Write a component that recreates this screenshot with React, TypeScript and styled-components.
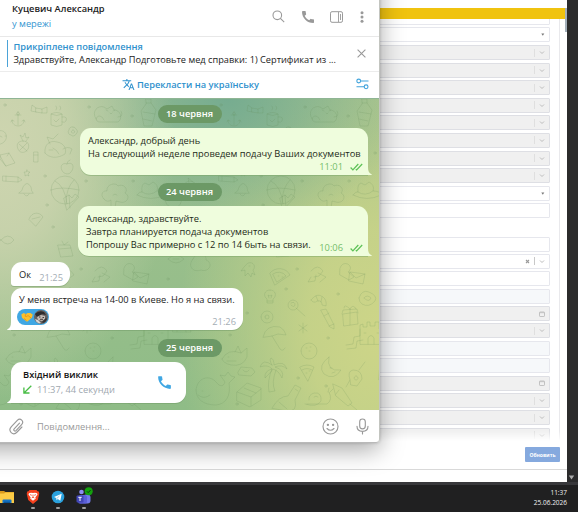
import styled, { createGlobalStyle, css } from "styled-components";
import { MdCall, MdTranslate } from "react-icons/md";

const GlobalStyle = createGlobalStyle`
    * {
        box-sizing: border-box;
    }
    body {
        margin: 0;
        overflow: hidden;
        font-family: "Open Sans", "Noto Sans", sans-serif;
        font-size: 9.3px;
        color: #222;
    }
    svg {
        display: block;
        flex-shrink: 0;
    }
`;

const Desktop = styled.div`
    position: relative;
    width: 578px;
    height: 512px;
    overflow: hidden;
    display: flex;
    flex-direction: column;
    background: #202021;
`;

/* ---------- browser page behind the chat ---------- */

const Browser = styled.div`
    height: 482px;
    display: flex;
`;

const Page = styled.div`
    width: 567px;
    background: #fff;
    display: flex;
    flex-direction: column;
`;

const Banner = styled.div`
    height: 11px;
    width: 565px;
    margin-top: 8px;
    background: #f0c30f;
    flex-shrink: 0;
`;

const PageBody = styled.div`
    height: 425px;
    display: flex;
    justify-content: space-between;
`;

const Form = styled.div`
    width: 560px;
    height: 424px;
    padding-right: 9px;
    border-right: 1px solid #e9e9ec;
    overflow: hidden;
    mask-image: linear-gradient(#000 412px, transparent 422px);
`;

const FieldGroup = styled.div<{ $top: number; $gap: number }>`
    display: flex;
    flex-direction: column;
    gap: ${(p) => p.$gap}px;
    margin-top: ${(p) => p.$top}px;
`;

const fills = {
    white: "#fff",
    grey: "#f0f0f0",
    blue: "#f6f8fa",
};

const Field = styled.div<{ $fill: keyof typeof fills }>`
    height: 15px;
    flex-shrink: 0;
    border: 1px solid ${(p) => (p.$fill === "grey" ? "#dedfe4" : "#e6e7ed")};
    border-radius: 1px;
    background: ${(p) => fills[p.$fill]};
    display: flex;
    align-items: center;
    justify-content: flex-end;
    gap: 4px;
    padding-right: 4px;
`;

const Divider = styled.i<{ $dark?: boolean }>`
    width: 1px;
    height: 8px;
    background: ${(p) => (p.$dark ? "#c8c8c8" : "#dfdfdf")};
`;

const ScrollThumb = styled.div`
    width: 2px;
    height: 24px;
    margin-top: -11px;
    background: #a3afb9;
`;

const PageFooter = styled.div`
    height: 26px;
    padding: 3px 7px 0 0;
    display: flex;
    justify-content: flex-end;
    border-bottom: 1px solid #d9d9d9;
`;

const UpdateButton = styled.button`
    width: 35px;
    height: 15px;
    padding: 0;
    border: 0;
    border-radius: 1px;
    background: #85a9de;
    color: #fff;
    font: 700 5px "Open Sans", sans-serif;
`;

const Gutter = styled.div`
    flex: 1;
    background: #2b2b2c;
    display: flex;
    align-items: flex-end;
    padding: 0 0 2px 1px;
`;

/* ---------- taskbar ---------- */

const Taskbar = styled.div`
    height: 30px;
    border-top: 3px solid #38383b;
    background: #202021;
    display: flex;
    justify-content: space-between;
    padding-right: 11px;
`;

const Apps = styled.div`
    display: flex;
    padding-top: 4px;
`;

const AppSlot = styled.div<{ $width: number; $running?: boolean }>`
    width: ${(p) => p.$width}px;
    display: flex;
    flex-direction: column;
    align-items: center;
    gap: 2px;
    &::after {
        content: "";
        width: 4px;
        height: 1.5px;
        border-radius: 1px;
        background: ${(p) => (p.$running ? "#a0a0a0" : "transparent")};
    }
`;

const Clock = styled.div`
    padding-top: 3px;
    color: #f2f2f2;
    font-size: 6.5px;
    line-height: 9.5px;
    text-align: right;
`;

/* ---------- chat window ---------- */

const ChatWindow = styled.div`
    position: absolute;
    left: 0;
    top: 0;
    width: 380px;
    height: 443px;
    display: flex;
    flex-direction: column;
    background: #fff;
    border-right: 1px solid #c3c5c0;
    border-bottom: 1px solid #b9b9b9;
    border-radius: 0 0 4px 0;
    overflow: hidden;
`;

const WindowShadow = styled.div`
    position: absolute;
    left: -40px;
    top: -40px;
    width: 420px;
    height: 483px;
    border-radius: 4px;
    box-shadow: 0 7px 24px rgba(0, 0, 0, 0.34), 0 0 3px rgba(0, 0, 0, 0.2);
`;

const ShadowClip = styled.div`
    position: absolute;
    left: 0;
    top: 0;
    width: 567px;
    height: 482px;
    overflow: hidden;
`;

const Header = styled.div`
    height: 37px;
    flex-shrink: 0;
    border-bottom: 1px solid #e8e8e8;
    display: flex;
    justify-content: space-between;
    padding: 2px 15px 0 12px;
`;

const Contact = styled.div`
    line-height: 14.5px;
`;

const Name = styled.div`
    font-weight: 600;
`;

const Status = styled.div`
    color: #3495d1;
`;

const HeaderIcons = styled.div`
    display: flex;
    align-items: center;
    height: 29px;
    color: #999;
`;

const Pinned = styled.div`
    height: 35px;
    flex-shrink: 0;
    border-bottom: 1px solid #ececec;
    display: flex;
    align-items: center;
    padding: 0 13px 2px 7px;
    gap: 5.5px;
`;

const PinBar = styled.div`
    width: 1px;
    height: 27px;
    background: #4ba3d8;
`;

const PinText = styled.div`
    width: 344px;
    flex-shrink: 0;
    white-space: nowrap;
    line-height: 13px;
    font-size: 9.22px;
`;

const PinTitle = styled.div`
    color: #2f91cd;
    font-weight: 600;
`;

const PinClose = styled.svg`
    margin-left: -6px;
`;

const TranslateBar = styled.div`
    height: 26px;
    flex-shrink: 0;
    display: grid;
    grid-template-columns: 1fr auto 1fr;
    align-items: center;
    padding: 0 10px 2px 12px;
    color: #2f91cd;
`;

const TranslateAction = styled.div`
    grid-column: 2;
    display: flex;
    align-items: center;
    gap: 2px;
    font-weight: 600;
`;

const TranslateSettings = styled.div`
    justify-self: end;
`;

const History = styled.div`
    position: relative;
    height: 312px;
    flex-shrink: 0;
    display: flex;
    flex-direction: column;
    padding: 6px 11px 0;
    border-top: 1px solid #8fb594;
    background:
        radial-gradient(ellipse 175px 250px at 0% 16%, #ced5b0 0%, rgba(206, 213, 176, 0.85) 35%, rgba(206, 213, 176, 0) 100%),
        radial-gradient(ellipse 180px 140px at 60% 0%, #76ac90 0%, rgba(118, 172, 144, 0) 100%),
        radial-gradient(ellipse 200px 290px at 100% 75%, #cdd588 0%, rgba(205, 213, 136, 0.85) 35%, rgba(205, 213, 136, 0) 100%),
        linear-gradient(#a2c190, #8fbc87);
`;

const Wallpaper = styled.svg`
    position: absolute;
    left: 0;
    top: 0;
    stroke: #5d8554;
    stroke-opacity: 0.22;
    stroke-width: 0.8;
    stroke-linecap: round;
    stroke-linejoin: round;
    fill: none;
`;

const DatePill = styled.div<{ $top?: number }>`
    position: relative;
    align-self: center;
    width: 64px;
    height: 18px;
    line-height: 18px;
    margin-top: ${(p) => p.$top ?? 0}px;
    border-radius: 9px;
    background: #6c9966;
    color: #fff;
    font-weight: 600;
    text-align: center;
    flex-shrink: 0;
`;

const Bubble = styled.div<{ $out?: boolean; $top: number; $width: number; $height: number; $joined?: boolean }>`
    position: relative;
    flex-shrink: 0;
    margin-top: ${(p) => p.$top}px;
    width: ${(p) => p.$width}px;
    height: ${(p) => p.$height}px;
    line-height: 12.8px;
    white-space: nowrap;
    border-radius: 11px;
    padding: ${(p) => (p.$out || p.$joined ? 7 : 6)}px 8px 0;
    ${(p) =>
        p.$out
            ? css`
                  align-self: flex-end;
                  background: #effddd;
                  color: #1c2a17;
                  border-bottom-right-radius: 0;
                  box-shadow: 0 1px 0 rgba(120, 165, 100, 0.45);
              `
            : css`
                  align-self: flex-start;
                  background: #fff;
                  border-bottom-left-radius: ${p.$joined ? 3 : 0}px;
                  box-shadow: 0 1px 0 rgba(110, 150, 100, 0.45);
              `}
`;

const Tail = styled.svg<{ $out?: boolean }>`
    position: absolute;
    bottom: 0;
    ${(p) => (p.$out ? "right: -4px;" : "left: -4px; transform: scaleX(-1);")}
    fill: ${(p) => (p.$out ? "#effddd" : "#fff")};
`;

const Meta = styled.div<{ $out?: boolean }>`
    position: absolute;
    right: ${(p) => (p.$out ? 5 : 7)}px;
    bottom: 1.5px;
    display: flex;
    align-items: center;
    gap: 7px;
    color: ${(p) => (p.$out ? "#75bd6b" : "#a4adb5")};
`;

const Reaction = styled.div`
    display: flex;
    align-items: center;
    justify-content: space-between;
    width: 32px;
    height: 16px;
    margin: 2px 0 0 -2px;
    padding: 0 1px 0 4px;
    border-radius: 8px;
    background: #40a7e3;
`;

const CallRow = styled.div`
    display: flex;
    justify-content: space-between;
    align-items: center;
    padding: 0 5px 0 4px;
    color: #40a7e3;
`;

const CallTitle = styled.div`
    color: #111;
    font-weight: 600;
    line-height: 14px;
`;

const CallInfo = styled.div`
    display: flex;
    align-items: center;
    gap: 5px;
    color: #a0a8af;
    line-height: 15px;
`;

const Composer = styled.div`
    height: 33px;
    display: flex;
    align-items: center;
    padding: 0 10px 0 9px;
    color: #999;
`;

const Placeholder = styled.div`
    flex: 1;
    padding-left: 13px;
`;

type Kind = "select" | "plain" | "native" | "date" | "clear";
type FieldSpec = [keyof typeof fills, Kind];

const topFields: FieldSpec[] = [
    ["white", "plain"],
    ["white", "native"],
    ["grey", "select"],
    ["grey", "select"],
    ["grey", "select"],
    ["grey", "select"],
    ["grey", "select"],
    ["grey", "select"],
    ["grey", "select"],
    ["grey", "select"],
    ["white", "native"],
    ["white", "plain"],
];

const bottomFields: FieldSpec[] = [
    ["white", "plain"],
    ["white", "clear"],
    ["white", "plain"],
    ["blue", "plain"],
    ["grey", "date"],
    ["grey", "select"],
    ["blue", "plain"],
    ["blue", "plain"],
    ["grey", "date"],
    ["grey", "select"],
    ["grey", "select"],
    ["grey", "select"],
];

const Chevron = () => (
    <svg width="6" height="5" viewBox="0 0 6 5" fill="none" stroke="#bdbdbd" strokeWidth="1">
        <path d="M1 1.5l2 2 2-2" />
    </svg>
);

const FormField = ({ spec: [fill, kind] }: { spec: FieldSpec }) => (
    <Field $fill={fill}>
        {kind === "clear" && (
            <svg width="5" height="5" stroke="#999" strokeWidth="1.1">
                <path d="M1 1l3 3M4 1L1 4" />
            </svg>
        )}
        {(kind === "select" || kind === "clear") && (
            <>
                <Divider $dark={kind === "clear"} />
                <Chevron />
            </>
        )}
        {kind === "native" && (
            <svg width="4" height="3" fill="#777">
                <path d="M.3.5h3L1.8 2.8z" />
            </svg>
        )}
        {kind === "date" && (
            <svg width="6" height="6" fill="none" stroke="#c2c2c2">
                <rect x=".5" y="1" width="5" height="4.5" rx=".6" />
                <path d="M.5 1.7h5" />
            </svg>
        )}
    </Field>
);

// One tile of the wallpaper: [x, y, path drawn around 0,0]
const doodles: [number, number, string][] = [
    [18, 20, "M0-7v13M-3-4h6M-6 1c0 4 3 6 6 6s6-2 6-6M-7 3l1-2 2 1M7 3l-1-2-2 1M0-7a1.5 1.5 0 1 0 .1 0"],
    [39, 11, "M-3-2l6 1v4l-6-1zM-3-2l-4-3-1 6 5 1M3-1l5-2v6l-5 0"],
    [58, 19, "M-7-4v11q6 3 11 0v-11q-5 3-11 0q6-3 11 0M4-1q6-1 4 4q-1 2-4 1M-4 2l2 2 3-3M-2-8q2-2 0-4M2-8q2-2 0-4"],
    [108, 14, "M-12 6c-5-8 2-14 8-12l3 2 5-3 2 4c7 0 9 9 4 12h-18c-5 0-5-6 0-6q3 1 4 4M-2-3l2 1M5-2l2-1M2 0l1 1 1-1M10 4q6 0 3-6"],
    [149, 14, "M-3-14h5v4l5 7-4 16h-8l-3-15 5-7zM-6-1l12 2M-6 6l9 2M-3-10h5"],
    [73, 32, "M0-4a3 3 0 0 1 3 2a3 3 0 0 1 0 5a3 3 0 0 1-5 1a3 3 0 0 1-2-5a3 3 0 0 1 4-3M0-1a1.6 1.6 0 1 0 .1 0"],
    [3, 39, "M-7-6c8-5 14 4 8 10-4 4-11 2-10-4M-3-2l2 1M2-2l1 0"],
    [23, 46, "M0-4c5 0 7 4 5 8s-8 5-10 0 0-8 5-8M-4-1l8 7M4-2l-7 7M0-4l-3-6 3 2 2-4 1 5 3-1-3 4"],
    [59, 49, "M-14 5c-1-9 5-13 12-11 7 1 10 7 8 12-8 5-16 4-20-1M-9-4l-3-7 6 2 5-5M-6 0q4 2 6 6M-10 2h4M4 1q5-3 9 0l-2 5"],
    [35, 58, "M-1-5h4v10h-4zM-1-2h4"],
    [67, 69, "M0-4c6-3 8 3 4 8-2 3-6 2-8 0-4-5-1-10 4-8q0-3 3-4"],
    [8, 61, "M-8-5l9-2 6 10-9 3zM-8-5l0 4 6 7M1-7l-2 3"],
    [12, 80, "M-9-3l15 1 4 3-4 2-15-1zM6-2v5M-6-3v5"],
    [27, 74, "M0-3l1 2 2 0-2 2 1 2-2-1-2 1 0-2-1-2 2 0z"],
    [25, 90, "M-6 4q4-2 4-6 4-7 8 0 0 4 2 6zM-1 5q3 4 5 0"],
    [65, 91, "M-14 0a14 14 0 1 1 28 0a14 14 0 1 1-28 0M-10-9q10 5 12 23M9-10q-8 8-8 23M-14 0q10-4 28 0"],
    [74, 103, "M-10-4l5-3 3 3 3-4 4 3-12 13zM-5-7l1 13"],
    [116, 96, "M-12 4c-5-5 0-9 3-8-1-7 9-9 11-5 5-3 11 3 7 7 6 3 2 11-5 9l-4-1-1 7-4-1 0-7q-4 3-7-1M-3 0q2-2 4 0"],
    [149, 91, "M-12 5q3-4 5-3-1-8 3-9l4 2 4-3q6 3 4 9 7 0 8 4-14 7-28 0M-7 2q7 5 15-1"],
    [181, 42, "M-7-8h14l3 6-10 11-10-11zM-10-2h20M-4-2l4 11 4-11"],
    [193, 89, "M-8 4q-4-9 4-11 8 0 12 11M-4-5l-1-5 5 4"],
    [174, 102, "M-8-4q7-7 15 0 2 9-7 11-11-2-8-11M-3-1h7"],
    [36, 121, "M-7-1c3-8 11-7 14-2l-7 9zM-4-1l8-2"],
    [65, 151, "M-7-5h12l3 11-12 1zM-6-1l12-1M-3-9l2 4 4-3"],
    [8, 141, "M-7 0q7-8 13 0-6 8-13 0l-5-5v10z"],
    [101, 139, "M-9 11q8-3 7-12 0-9 5-9 8 0 7 10 0 9 9 13l-8 2-7-5-8 5zM0-6l1 0M4-6l1 0M-3 2l8 2"],
    [130, 173, "M-6-4q2-6 8-4 5 4 0 8l6 5-5 3-9-5z"],
    [142, 178, "M-8-5l15 2-2 10-14-3zM-8-5l6 6 9-4"],
    [34, 170, "M-2-6c6-2 8 4 5 7l2 5-3-2-1 4-3-4-3 3v-6l-4 1 3-4zM-1-3h1"],
    [64, 178, "M-10-4a12 12 0 0 1 20 2l-15 10zM-7-3a9 9 0 0 1 13 2l-9 6zM-2-1h1M2 0h1"],
    [101, 174, "M-6 4l-3 5 7-1 1-6M-6-2q7-8 12 0l-4 5-5 1M1 0l8 4-6 5"],
    [54, 198, "M0-7c6 0 7 6 3 9v4h-6v-4c-4-3-3-9 3-9M-3 4h6M-1 1l-1-3 2 1 2-1-1 3"],
    [77, 207, "M0-6a5 5 0 1 0 .1 0M3 2l9 8M-2-3q4-2 4 2-1 3-4 0"],
    [103, 201, "M-8 0q6-8 12-3 4 3 3 9l-4-1q0-5-5-4-3 3-6-1M-3-4l2 5M3-3l-1 5"],
    [151, 199, "M-8 0q3-9 10-6 9 4 6 9-6 7-13 3-3-2-3-6M-3 0q3-4 7 0-2 5-7 0"],
    [51, 218, "M-6 0a6 6 0 1 0 12 0a6 6 0 1 0-12 0M-2 0a2 2 0 1 0 4 0a2 2 0 1 0-4 0"],
    [111, 220, "M-6-9l5-1 8 16 0 4-4-2zM-3-3l5-3M2 7l5-2"],
    [134, 218, "M-7-3l14-2 1 12-14 2zM-8-3l1-4 14-1 1 4M0-8v16M0-8q-6-6-6-1M0-8q3-6 6 0"],
    [87, 229, "M0-5v10M-4-3l8 6M4-3l-8 6"],
    [155, 231, "M-11 14v-19l3-1v3h4v-5h3v4h5v-4h4v7h5v15zM-3 14v-6q3-5 6 0v6M-7 3h2M6 3h2"],
    [57, 235, "M-10 3q3-13 17-10 5 3 6 8l-8-1-6 2zM-1 2l8 13q3 3 5-1"],
    [93, 252, "M-8 0a8 8 0 1 0 16 0a8 8 0 1 0-16 0M-3-3h1M1-4h1M0 0h1"],
    [19, 257, "M-13 3q6-11 19-6l6-5 0 9q-4 10-16 8-8-2-9-6M-7 1h1M-8 5l9 0M0-4l3-6 3 7"],
    [116, 270, "M-3-12q-3 15 12 13-7 11-17 4-7-8 5-17M-2-1l2 0M0 4l3-1"],
    [136, 242, "M-6 4l7-1 1-7 6-1 0-7M-5 8l9-1 1-7 6-1"],
    [57, 270, "M-1-4q-9-7-12 2 8-3 12 2-8 2-7 9 7-7 8-9 6 2 9 9 3-8-7-11 7-3 12 2-3-9-13-4 0-6-3-7-2 2 1 7M-1 0q-5 12-3 23l6-1q-4-8 1-21"],
    [92, 274, "M-8-6q7-4 14 0l-6 14zM-6-3q5-3 10 0M-2 0h1M1-2h1"],
    [30, 272, "M-8 1l3-5 11 1 3 4-4 4-12-1zM-3-1q3 4 6 0"],
    [139, 277, "M-5 4q-3-9 3-10 9 0 9 9l-5 7-6-1zM-5 4l-4 7M4-6l6-8M1 0a2 2 0 1 0 .1 0"],
    [212, 290, "M-16 1c1-12 13-16 20-8 4 5 7 5 9 0l-5-7 5 1 3-4 3 4 4 1-6 6c2 13-3 21-13 22-13 0-20-6-20-15M-10 2h1M-14 6q6 5 12 0"],
    [-4, 290, "M-16 1c1-12 13-16 20-8 4 5 7 5 9 0l-5-7 5 1 3-4 3 4 4 1-6 6c2 13-3 21-13 22-13 0-20-6-20-15"],
    [34, 295, "M-13-2l10-9 14 5 0 12-11 7-13-6zM-13-2l14 5 10-8M1 3v9M-6-6l12 5"],
    [72, 300, "M-16 9q7-12 16-12l7-11 6 3-6 12q3 12-8 11zM-9 3l8 7M7-10l3 2"],
    [100, 299, "M-11 6q12 4 16-3 1-9-7-8-6 2-5 7M-9 6h20q6-4 2-12M-2-1q2-2 4 0M12-6l1-4M14-6l3-3"],
    [129, 296, "M-12-11l9 4 10 15-4 3-12-10zM5 9l7 6M-6-5l-3 4"],
    [172, 275, "M-8-9q4-4 8 0l3 10-5 9-7-4zM-7-3l8-1"],
    [181, 137, "M-8 5q-3-9 4-12 8-2 10 5 4 6-2 9zM-4-1h1M2-1h1"],
    [176, 160, "M-8 0q8-8 16 0-8 8-16 0M-3 0h6"],
    [202, 165, "M-9-5c4-9 14-6 13 1 8 3 3 13-5 10-8 3-14-4-8-11"],
    [195, 200, "M-8 0a8 8 0 1 0 16 0a8 8 0 1 0-16 0M-5-5l10 9"],
    [182, 229, "M-9-4h16l2 8h-18zM-5-4l0 8M3-4l1 8"],
    [84, 129, "M0-4l1 3 3 0-2 2 1 3-3-2-3 2 1-3-2-2 3 0z"],
];

const dots = [[5, 6], [89, 8], [132, 17], [99, 40], [45, 77], [86, 82], [133, 82], [47, 106], [53, 128], [81, 170], [122, 195], [31, 214], [70, 190], [14, 236], [112, 239], [82, 279], [21, 305], [110, 287], [159, 54], [168, 180], [203, 128], [190, 250]];

const WallpaperArt = () => (
    <Wallpaper width="380" height="311">
        <defs>
            <pattern id="doodles" width="216" height="330" patternUnits="userSpaceOnUse">
                {doodles.map(([x, y, d]) => (
                    <path key={`${x}-${y}`} d={d} transform={`translate(${x} ${y})`} />
                ))}
                {dots.map(([x, y]) => (
                    <circle key={`${x}.${y}`} cx={x} cy={y} r="1.2" />
                ))}
            </pattern>
        </defs>
        <rect width="380" height="311" fill="url(#doodles)" stroke="none" />
    </Wallpaper>
);

const BubbleTail = ({ out }: { out?: boolean }) => (
    <Tail $out={out} width="5" height="8" viewBox="0 0 5 8">
        <path d="M0 0h1c0 4 1 6 3.6 7.3.3.3.2.7-.2.7H0z" />
    </Tail>
);

const Checks = () => (
    <svg width="13" height="8" viewBox="0 0 13 8" fill="none" stroke="#5dc257" strokeWidth="1.25">
        <path d="M.6 4.5l2.3 2.4L8.3 1M5.8 6.2l.8.7L12.2 1" />
    </svg>
);

const App = () => (
    <Desktop>
        <GlobalStyle />
        <Browser>
            <Page>
                <Banner />
                <PageBody>
                    <Form>
                        <FieldGroup $top={-9.2} $gap={2.6}>
                            {topFields.map((spec, i) => (
                                <FormField key={i} spec={spec} />
                            ))}
                        </FieldGroup>
                        <FieldGroup $top={18.2} $gap={2.4}>
                            {bottomFields.map((spec, i) => (
                                <FormField key={i} spec={spec} />
                            ))}
                        </FieldGroup>
                    </Form>
                    <ScrollThumb />
                </PageBody>
                <PageFooter>
                    <UpdateButton>Обновить</UpdateButton>
                </PageFooter>
            </Page>
            <Gutter>
                <svg width="7" height="5" fill="#aaa">
                    <path d="M.8.5h5.4L3.5 4.5z" />
                </svg>
            </Gutter>
        </Browser>

        <Taskbar>
            <Apps>
                <AppSlot $width={20}>
                    <svg width="20" height="16" viewBox="0 0 20 16">
                        <path d="M-6 2h10l1.500 1H14v11H-6z" fill="#d99a1d" />
                        <path d="M-6 4.500H4l1.500-1H14V14H-6z" fill="#fccb45" />
                        <path d="M2.500 14v-2.500q0-1 1-1h7q1 0 1 1V14z" fill="#1473c4" />
                        <path d="M4 14v-1.300h6V14z" fill="#0c5697" />
                    </svg>
                </AppSlot>
                <AppSlot $width={25} $running>
                    <svg width="14" height="16" viewBox="0 0 14 16">
                        <path d="M3.500 1h7l1 1.300 1.300.2.5 2.200L11.800 11 7 15 2.200 11 .7 4.700l.5-2.200 1.300-.2z" fill="#f5411e" />
                        <path d="M3 4.200l2-.5 2 .4 2-.4 2 .5.5 1.300-2.200 3 .5 1L7 11.800 4.200 9.500l.5-1-2.200-3z" fill="#fff" />
                        <path d="M4 5.600l1.800.7M10 5.600l-1.800.7M7 5.500v2.500M5.700 9L7 8.200 8.300 9" stroke="#f5411e" strokeWidth=".8" fill="none" />
                    </svg>
                </AppSlot>
                <AppSlot $width={26} $running>
                    <svg width="14" height="16" viewBox="0 0 14 16">
                        <circle cx="7" cy="8" r="6.300" fill="#2aa1dd" />
                        <path d="M3 7.900l7.700-3.100-1.400 7-2.500-1.800-1.200 1.200-.4-2.200z" fill="#fff" />
                        <path d="M5.200 9l4.300-3.200-2.900 4z" fill="#b5d8ec" />
                    </svg>
                </AppSlot>
                <AppSlot $width={26} $running>
                    <svg width="18" height="16" viewBox="0 0 18 16" overflow="visible">
                        <circle cx="6.500" cy="3" r="2.300" fill="#8b8df0" />
                        <rect x="8" y="5.500" width="7.500" height="9" rx="3" fill="#7178e8" />
                        <rect x="3" y="6" width="9" height="8.700" rx="2.500" fill="#5b5fd8" />
                        <rect x="1.500" y="6.500" width="7" height="7" rx="1" fill="#4146b5" />
                        <path d="M3.300 8.300h3.400M5 8.300v3.700" stroke="#fff" strokeWidth="1" />
                        <circle cx="13.700" cy="2.200" r="4" fill="#13a10e" />
                        <path d="M11.900 2.300l1.300 1.300 2.300-2.500" stroke="#0a2c0a" strokeWidth=".9" fill="none" />
                    </svg>
                </AppSlot>
            </Apps>
            <Clock>
                <div>11:37</div>
                <div>25.06.2026</div>
            </Clock>
        </Taskbar>

        <ShadowClip>
            <WindowShadow />
        </ShadowClip>

        <ChatWindow>
            <Header>
                <Contact>
                    <Name>Куцевич Александр</Name>
                    <Status>у мережі</Status>
                </Contact>
                <HeaderIcons>
                    <svg width="13" height="13" viewBox="0 0 13 13" fill="none" stroke="currentColor" strokeWidth="1.100">
                        <circle cx="5.300" cy="5.300" r="4.300" />
                        <path d="M8.400 8.400l3.800 3.800" />
                    </svg>
                    <MdCall size={16} style={{ marginLeft: 15 }} />
                    <svg width="13" height="12" viewBox="0 0 13 12" fill="none" stroke="currentColor" style={{ marginLeft: 14 }}>
                        <rect x=".5" y=".7" width="12" height="10.600" rx="1.500" />
                        <path d="M8.500 1v10M10.500 3v6" strokeWidth=".9" />
                    </svg>
                    <svg width="4" height="12" fill="currentColor" style={{ marginLeft: 17 }}>
                        <circle cx="2" cy="1.700" r="1.500" />
                        <circle cx="2" cy="6" r="1.500" />
                        <circle cx="2" cy="10.300" r="1.500" />
                    </svg>
                </HeaderIcons>
            </Header>
            <Pinned>
                <PinBar />
                <PinText>
                    <PinTitle>Прикріплене повідомлення</PinTitle>
                    <div>Здравствуйте, Александр Подготовьте мед справки: 1) Сертификат из ...</div>
                </PinText>
                <PinClose width="9" height="9" stroke="#999" strokeWidth="1.100">
                    <path d="M.6.6l7.800 7.800M8.400.6L.6 8.400" />
                </PinClose>
            </Pinned>
            <TranslateBar>
                <TranslateAction>
                    <MdTranslate size={13} />
                    Перекласти на українську
                </TranslateAction>
                <TranslateSettings>
                    <svg width="13" height="12" viewBox="0 0 13 12" fill="none" stroke="#40a3dc" strokeWidth="1.100">
                        <circle cx="2.700" cy="3" r="1.900" />
                        <path d="M4.600 3H12.500M.5 8.800h7.700" />
                        <circle cx="10.100" cy="8.800" r="1.900" />
                    </svg>
                </TranslateSettings>
            </TranslateBar>

            <History>
                <WallpaperArt />
                <DatePill>18 червня</DatePill>
                <Bubble $out $top={5} $width={288} $height={47}>
                    Александр, добрый день
                    <br />
                    На следующий неделе проведем подачу Ваших документов
                    <Meta $out>
                        11:01 <Checks />
                    </Meta>
                    <BubbleTail out />
                </Bubble>
                <DatePill $top={8}>24 червня</DatePill>
                <Bubble $out $top={5} $width={290} $height={50}>
                    Александр, здравствуйте.
                    <br />
                    Завтра планируется подача документов
                    <br />
                    Попрошу Вас примерно с 12 по 14 быть на связи.
                    <Meta $out>
                        10:06 <Checks />
                    </Meta>
                    <BubbleTail out />
                </Bubble>
                <Bubble $top={6} $width={59} $height={24} $joined>
                    Ок
                    <Meta>21:25</Meta>
                </Bubble>
                <Bubble $top={2} $width={232} $height={42}>
                    У меня встреча на 14-00 в Киеве. Но я на связи.
                    <Reaction>
                        <svg width="12" height="10" viewBox="0 0 12 10">
                            <path d="M.3 2.500L2.500 1 5 2l1.500-1L9.500 1l2.200 1.500-.7 3-4.500 4H5.500L1 5.800z" fill="#fbc02d" />
                            <path d="M5 2L4 4.200l1.700.3L7 3.500l3 2.500M3 6.500l2.500 2" stroke="#e08a13" strokeWidth=".7" fill="none" />
                        </svg>
                        <svg width="14" height="14" viewBox="0 0 14 14">
                            <circle cx="7" cy="7" r="7" fill="#66615f" />
                            <path d="M1 4q4-4 9-2l2 3-4-1-5 3z" fill="#2e2c2d" />
                            <path d="M3 7l4-2 4 1v3L8 11 4 10z" fill="#c4bbb5" />
                            <path d="M1 9l3 1 3 3-2 .6q-3-1-4-4.600z" fill="#d9d6d4" />
                            <path d="M5 7h1.500M8.500 7.500H10M6 9.300h3" stroke="#332e2d" strokeWidth=".9" />
                            <path d="M8 12l4-4 1 1q-1 3-4 4z" fill="#353334" />
                        </svg>
                    </Reaction>
                    <Meta>21:26</Meta>
                    <BubbleTail />
                </Bubble>
                <DatePill $top={9}>25 червня</DatePill>
                <Bubble $top={5} $width={175} $height={41}>
                    <CallRow>
                        <div>
                            <CallTitle>Вхідний виклик</CallTitle>
                            <CallInfo>
                                <svg width="9" height="9" fill="none" stroke="#48bd45" strokeWidth="1.300">
                                    <path d="M8.300.7L1 8M.9 2.500V8H6.500" />
                                </svg>
                                11:37, 44 секунди
                            </CallInfo>
                        </div>
                        <MdCall size={17} />
                    </CallRow>
                    <BubbleTail />
                </Bubble>
            </History>

            <Composer>
                <svg width="15" height="17" viewBox="0 0 15 17" fill="none" stroke="currentColor" strokeWidth="1.150" strokeLinecap="round">
                    <path d="M10.500 5.200L5.200 10.800c-1.200 1.300.6 3 1.800 1.800l5.600-6c3-3.300-1.300-7.300-4.300-4.200L2.400 8.600c-4 4.400 1.600 9.700 5.700 5.400l4.800-5" />
                </svg>
                <Placeholder>Повідомлення...</Placeholder>
                <svg width="17" height="17" viewBox="0 0 17 17" fill="none" stroke="currentColor" strokeWidth="1.150" strokeLinecap="round">
                    <circle cx="8.500" cy="8.500" r="7.500" />
                    <path d="M5 10.500q3.500 3.500 7 0" />
                    <circle cx="5.900" cy="6.800" r=".6" fill="currentColor" />
                    <circle cx="11.100" cy="6.800" r=".6" fill="currentColor" />
                </svg>
                <svg width="13" height="17" viewBox="0 0 13 17" fill="none" stroke="currentColor" strokeWidth="1.150" strokeLinecap="round" style={{ marginLeft: 17 }}>
                    <rect x="3.700" y="1" width="5.600" height="9.800" rx="2.800" />
                    <path d="M1 8.300c0 3 2.300 5 5.500 5s5.500-2 5.500-5M6.500 13.300v2.700" />
                </svg>
            </Composer>
        </ChatWindow>
    </Desktop>
);

export default App;
